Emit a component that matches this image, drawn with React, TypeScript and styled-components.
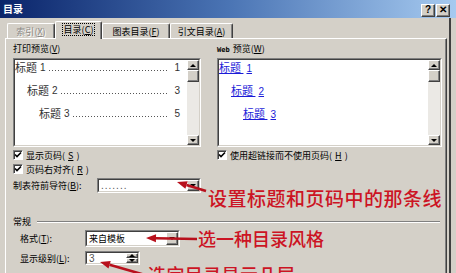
import React from "react";
import styled, { createGlobalStyle } from "styled-components";

const FACE = "#d4d0c8";
const UI_FONT = `"Noto Sans CJK SC", "Noto Sans", sans-serif`;

const GlobalStyle = createGlobalStyle`
  html, body { margin: 0; padding: 0; background: ${FACE}; }
  body { width: 456px; height: 273px; overflow: hidden; }
`;

const Dialog = styled.div`
  position: relative;
  width: 456px;
  height: 273px;
  overflow: hidden;
  background: ${FACE};
  display: flex;
  flex-direction: column;
  font-family: ${UI_FONT};
  font-size: 9px;
  color: #000;
`;

const TitleBar = styled.div`
  height: 18px;
  flex: none;
  box-sizing: border-box;
  background: linear-gradient(to right, #0a246a 0%, #4a74b4 50%, #a6caf0 100%);
  display: flex;
  align-items: center;
  justify-content: space-between;
  padding: 0 6px 0 3px;
`;

const Title = styled.span`
  color: #fff;
  font-weight: 700;
  font-size: 10px;
  line-height: 12px;
`;

const CapButtons = styled.div`
  display: flex;
  gap: 1px;
  margin-top: 2px;
`;

const CapButton = styled.div`
  width: 14px;
  height: 13px;
  box-sizing: border-box;
  background: ${FACE};
  border-top: 1px solid #fff;
  border-left: 1px solid #fff;
  border-right: 1px solid #404040;
  border-bottom: 1px solid #404040;
  box-shadow: inset -1px -1px #808080;
  display: flex;
  align-items: center;
  justify-content: center;
  font: 700 10px "Liberation Sans", sans-serif;
  line-height: 10px;
`;

const Body = styled.div`
  flex: 1;
  width: 451px;
  box-sizing: border-box;
  padding-left: 5px;
  border-right: 2px solid #404040;
  display: flex;
  flex-direction: column;
`;

const TabStrip = styled.div`
  height: 17px;
  margin-top: 3px;
  padding-left: 2px;
  display: flex;
  align-items: flex-end;
  flex: none;
`;

const Tab = styled.div<{ $w: number; $active?: boolean; $disabled?: boolean }>`
  width: ${(p) => p.$w}px;
  height: ${(p) => (p.$active ? 18 : 15)}px;
  margin-bottom: ${(p) => (p.$active ? -1 : 0)}px;
  box-sizing: border-box;
  position: relative;
  z-index: ${(p) => (p.$active ? 2 : 1)};
  background: ${FACE};
  border-top: 1px solid #fff;
  border-left: 1px solid #fff;
  border-right: 1px solid #404040;
  border-top-left-radius: 2px;
  border-top-right-radius: 2px;
  box-shadow: inset -1px 0 #808080;
  display: flex;
  align-items: ${(p) => (p.$active ? "flex-start" : "center")};
  padding-top: ${(p) => (p.$active ? 2 : 0)}px;
  justify-content: center;
  color: ${(p) => (p.$disabled ? "#8a8884" : "#000")};
  text-shadow: ${(p) => (p.$disabled ? "1px 1px #fff" : "none")};
  white-space: nowrap;
  line-height: 11px;
`;

const Focus = styled.span`
  outline: 1px dotted #000;
  outline-offset: 0px;
  padding: 0 1px;
`;

const Panel = styled.div`
  flex: 1;
  width: 442px;
  box-sizing: border-box;
  border-top: 1px solid #fff;
  border-left: 1px solid #fff;
  border-right: 1px solid #404040;
  box-shadow: inset -1px 0 #808080;
  padding: 3px 4px 0 7px;
  display: flex;
  flex-direction: column;
`;

const PreviewGrid = styled.div`
  display: grid;
  grid-template-columns: 188px 225px;
  column-gap: 16px;
`;

const Column = styled.div`
  display: flex;
  flex-direction: column;
`;

const Label = styled.div`
  height: 13px;
  line-height: 13px;
  white-space: nowrap;
`;

const SmallLatin = styled.span`
  font-family: "DejaVu Sans Mono", monospace;
  font-size: 7px;
  font-weight: 700;
  margin-right: 3px;
`;

const SunkenOuter = styled.div<{ $h: number }>`
  margin-top: 3px;
  height: ${(p) => p.$h}px;
  box-sizing: border-box;
  border-top: 1px solid #808080;
  border-left: 1px solid #808080;
  border-right: 1px solid #fff;
  border-bottom: 1px solid #fff;
  display: flex;
`;

const SunkenInner = styled.div`
  flex: 1;
  display: flex;
  border-top: 1px solid #404040;
  border-left: 1px solid #404040;
  border-right: 1px solid ${FACE};
  border-bottom: 1px solid ${FACE};
  background: #fff;
  min-width: 0;
`;

const PreviewBody = styled.div`
  flex: 1;
  min-width: 0;
  display: flex;
  flex-direction: column;
  gap: 9px;
  background: #fff;
`;

const TocRow = styled.div<{ $level: number }>`
  height: 14px;
  display: flex;
  align-items: center;
  padding-left: ${(p) => (p.$level - 1) * 12}px;
  padding-right: 7px;
  font-size: 11px;
  color: #333;
  white-space: nowrap;
`;

const Num = styled.span`
  font-family: "Liberation Sans", sans-serif;
  font-size: 10px;
  margin-left: 3px;
`;

const Leader = styled.span`
  flex: 1;
  min-width: 0;
  height: 1px;
  align-self: center;
  margin: 6px 2px 0 3px;
  background-image: repeating-linear-gradient(to right, #555 0 1px, transparent 1px 3px);
`;

const LinkRow = styled.div<{ $level: number }>`
  height: 14px;
  display: flex;
  align-items: center;
  padding-left: ${(p) => (p.$level - 1) * 12}px;
  font-size: 11px;
  white-space: nowrap;
`;

const Link = styled.span`
  color: #1c1cd8;
  text-decoration: underline;
  text-underline-offset: 1px;
`;

const Scrollbar = styled.div`
  width: 12px;
  flex: none;
  display: flex;
  flex-direction: column;
  background: #ebe9e5;
`;

const Raised = styled.div<{ $h: number }>`
  height: ${(p) => p.$h}px;
  flex: none;
  box-sizing: border-box;
  background: ${FACE};
  border-top: 1px solid #fff;
  border-left: 1px solid #fff;
  border-right: 1px solid #404040;
  border-bottom: 1px solid #404040;
  box-shadow: inset -1px -1px #808080;
  display: flex;
  align-items: center;
  justify-content: center;
`;

const Track = styled.div`
  flex: 1;
`;

const Tri = styled.span<{ $dir: "up" | "down" }>`
  width: 0;
  height: 0;
  border-left: 3px solid transparent;
  border-right: 3px solid transparent;
  ${(p) =>
    p.$dir === "up" ? "border-bottom: 3px solid #000;" : "border-top: 3px solid #000;"}
`;

const CheckRow = styled.div<{ $first?: boolean }>`
  height: 14px;
  margin-top: ${(p) => (p.$first ? 1 : 0)}px;
  display: flex;
  align-items: center;
  gap: 3px;
  white-space: nowrap;
`;

const CheckBox = styled.span`
  width: 10px;
  height: 10px;
  box-sizing: border-box;
  border-top: 1px solid #808080;
  border-left: 1px solid #808080;
  border-right: 1px solid #fff;
  border-bottom: 1px solid #fff;
  box-shadow: inset 1px 1px #404040;
  background: #fff;
  display: flex;
  align-items: center;
  justify-content: center;
`;

const LeaderRow = styled.div`
  margin-top: 2px;
  height: 15px;
  display: flex;
  align-items: center;
  white-space: nowrap;
`;

const FieldLabel = styled.span<{ $w: number }>`
  width: ${(p) => p.$w}px;
  flex: none;
`;

const Field = styled.div<{ $w: number; $h: number }>`
  width: ${(p) => p.$w}px;
  height: ${(p) => p.$h}px;
  box-sizing: border-box;
  border-top: 1px solid #808080;
  border-left: 1px solid #808080;
  border-right: 1px solid #fff;
  border-bottom: 1px solid #fff;
  display: flex;
`;

const FieldInner = styled.div`
  flex: 1;
  display: flex;
  align-items: center;
  border-top: 1px solid #404040;
  border-left: 1px solid #404040;
  border-right: 1px solid ${FACE};
  border-bottom: 1px solid ${FACE};
  background: #fff;
  min-width: 0;
`;

const FieldText = styled.span<{ $latin?: boolean }>`
  flex: 1;
  padding-left: 2px;
  font-family: ${(p) => (p.$latin ? `"Liberation Sans", sans-serif` : UI_FONT)};
  font-size: ${(p) => (p.$latin ? 10 : 9)}px;
  letter-spacing: ${(p) => (p.$latin ? 1 : 0)}px;
  color: ${(p) => (p.$latin ? "#555" : "#000")};
  white-space: nowrap;
  overflow: hidden;
`;

const DropButton = styled(Raised)`
  width: 12px;
  align-self: stretch;
  height: auto;
`;

const SpinStack = styled.div`
  width: 12px;
  align-self: stretch;
  display: flex;
  flex-direction: column;
`;

const SpinHalf = styled(Raised)`
  flex: 1;
  height: auto;
`;

const Group = styled.div`
  margin-top: 22px;
  display: flex;
  flex-direction: column;
`;

const GroupHeader = styled.div`
  height: 13px;
  display: flex;
  align-items: center;
  padding-right: 2px;
`;

const GroupRule = styled.span`
  flex: 1;
  margin-left: 6px;
  height: 0;
  border-top: 1px solid #808080;
  border-bottom: 1px solid #fff;
`;

const FormRow = styled.div<{ $gap: number }>`
  margin-top: ${(p) => p.$gap}px;
  padding-left: 7px;
  display: flex;
  align-items: center;
  white-space: nowrap;
`;

const Overlay = styled.svg`
  position: absolute;
  left: 0;
  top: 0;
  pointer-events: none;
  z-index: 5;
`;

const Note = styled.div<{ $x: number; $y: number; $size: number; $ls: number }>`
  position: absolute;
  left: ${(p) => p.$x}px;
  top: ${(p) => p.$y}px;
  font-family: ${UI_FONT};
  font-size: ${(p) => p.$size}px;
  letter-spacing: ${(p) => p.$ls}px;
  line-height: 1;
  font-weight: 500;
  color: #cc1424;
  white-space: nowrap;
  z-index: 6;
`;

const M = ({ k }: { k: string }) => (
  <>
    (<u>{k}</u>)
  </>
);

const Check = () => (
  <svg width="8" height="8" viewBox="0 0 8 8">
    <path d="M1 3.5 L3 5.5 L7 1.5" fill="none" stroke="#000" strokeWidth="1.6" />
  </svg>
);

function arrowHead(tx: number, ty: number, fx: number, fy: number, len = 10, half = 4) {
  const dx = tx - fx;
  const dy = ty - fy;
  const d = Math.hypot(dx, dy);
  const ux = dx / d;
  const uy = dy / d;
  const bx = tx - ux * len;
  const by = ty - uy * len;
  const px = -uy * half;
  const py = ux * half;
  return {
    points: `${tx},${ty} ${bx + px},${by + py} ${bx - px},${by - py}`,
    bx,
    by,
  };
}

const Arrow = ({ from, to }: { from: [number, number]; to: [number, number] }) => {
  const h = arrowHead(to[0], to[1], from[0], from[1]);
  return (
    <g>
      <line x1={from[0]} y1={from[1]} x2={h.bx} y2={h.by} stroke="#b8101c" strokeWidth="2.6" />
      <polygon points={h.points} fill="#b8101c" />
    </g>
  );
};

const tocRows: [number, string, string][] = [
  [1, "1", "1"],
  [2, "2", "3"],
  [3, "3", "5"],
];

const ScrollbarV = () => (
  <Scrollbar>
    <Raised $h={10}>
      <Tri $dir="up" />
    </Raised>
    <Raised $h={12} />
    <Track />
    <Raised $h={10}>
      <Tri $dir="down" />
    </Raised>
  </Scrollbar>
);

export default function App() {
  return (
    <>
      <GlobalStyle />
      <Dialog>
        <TitleBar>
          <Title>目录</Title>
          <CapButtons>
            <CapButton>?</CapButton>
            <CapButton>✕</CapButton>
          </CapButtons>
        </TitleBar>
        <Body>
          <TabStrip>
            <Tab $w={48} $disabled>
              索引<M k="X" />
            </Tab>
            <Tab $w={47} $active>
              <Focus>
                目录<M k="C" />
              </Focus>
            </Tab>
            <Tab $w={68}>
              图表目录<M k="F" />
            </Tab>
            <Tab $w={63}>
              引文目录<M k="A" />
            </Tab>
          </TabStrip>
          <Panel>
            <PreviewGrid>
              <Column>
                <Label>
                  打印预览<M k="V" />
                </Label>
                <SunkenOuter $h={89}>
                  <SunkenInner>
                    <PreviewBody>
                      {tocRows.map(([lvl, n, pg]) => (
                        <TocRow key={n} $level={lvl}>
                          标题<Num>{n}</Num>
                          <Leader />
                          <Num>{pg}</Num>
                        </TocRow>
                      ))}
                    </PreviewBody>
                    <ScrollbarV />
                  </SunkenInner>
                </SunkenOuter>
                <CheckRow $first>
                  <CheckBox>
                    <Check />
                  </CheckBox>
                  显示页码<M k="S" />
                </CheckRow>
                <CheckRow>
                  <CheckBox>
                    <Check />
                  </CheckBox>
                  页码右对齐<M k="R" />
                </CheckRow>
                <LeaderRow>
                  <FieldLabel $w={84}>
                    制表符前导符<M k="B" />:
                  </FieldLabel>
                  <Field $w={104} $h={15}>
                    <FieldInner>
                      <FieldText $latin>.......</FieldText>
                      <DropButton $h={11}>
                        <Tri $dir="down" />
                      </DropButton>
                    </FieldInner>
                  </Field>
                </LeaderRow>
              </Column>
              <Column>
                <Label>
                  <SmallLatin>Web</SmallLatin>预览<M k="W" />
                </Label>
                <SunkenOuter $h={89}>
                  <SunkenInner>
                    <PreviewBody>
                      {[1, 2, 3].map((lvl) => (
                        <LinkRow key={lvl} $level={lvl}>
                          <Link>
                            标题 <Num as="span">{lvl}</Num>
                          </Link>
                        </LinkRow>
                      ))}
                    </PreviewBody>
                    <ScrollbarV />
                  </SunkenInner>
                </SunkenOuter>
                <CheckRow $first>
                  <CheckBox>
                    <Check />
                  </CheckBox>
                  使用超链接而不使用页码<M k="H" />
                </CheckRow>
              </Column>
            </PreviewGrid>
            <Group>
              <GroupHeader>
                常规
                <GroupRule />
              </GroupHeader>
              <FormRow $gap={2}>
                <FieldLabel $w={65}>
                  格式<M k="T" />:
                </FieldLabel>
                <Field $w={95} $h={17}>
                  <FieldInner>
                    <FieldText>来自模板</FieldText>
                    <DropButton $h={13}>
                      <Tri $dir="down" />
                    </DropButton>
                  </FieldInner>
                </Field>
              </FormRow>
              <FormRow $gap={4}>
                <FieldLabel $w={65}>
                  显示级别<M k="L" />:
                </FieldLabel>
                <Field $w={55} $h={14}>
                  <FieldInner>
                    <FieldText $latin>3</FieldText>
                    <SpinStack>
                      <SpinHalf $h={5}>
                        <Tri $dir="up" />
                      </SpinHalf>
                      <SpinHalf $h={5}>
                        <Tri $dir="down" />
                      </SpinHalf>
                    </SpinStack>
                  </FieldInner>
                </Field>
              </FormRow>
            </Group>
          </Panel>
        </Body>
        <Overlay width={456} height={273} viewBox="0 0 456 273">
          <Arrow from={[206, 191]} to={[177, 182]} />
          <Arrow from={[197, 239]} to={[146, 238]} />
          <Arrow from={[152, 277]} to={[100, 262]} />
        </Overlay>
        <Note $x={208} $y={188} $size={19} $ls={0.5}>
          设置标题和页码中的那条线
        </Note>
        <Note $x={198} $y={229} $size={18} $ls={0}>
          选一种目录风格
        </Note>
        <Note $x={148} $y={265} $size={18} $ls={0.4}>
          选定目录显示几层
        </Note>
      </Dialog>
    </>
  );
}
